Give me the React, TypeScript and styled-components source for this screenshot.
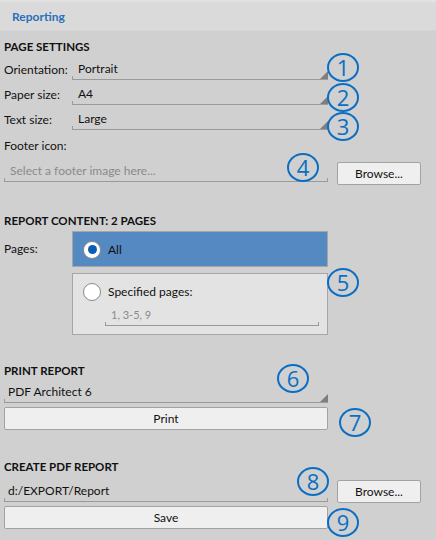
import React from "react";
import styled, { createGlobalStyle } from "styled-components";

const Global = createGlobalStyle`
  html, body { margin: 0; padding: 0; background: #d0d0d0; }
  * { box-sizing: border-box; }
`;

const Panel = styled.div`
  position: relative;
  width: 436px;
  height: 540px;
  background: #d0d0d0;
  font-family: Lato, "Noto Sans", sans-serif;
  font-size: 12px;
  color: #111;
  overflow: hidden;
`;

const Header = styled.div`
  height: 31px;
  background: #dadada;
  border-top: 2px solid #e2e2e2;
  border-bottom: 1px solid #d4d4d4;
  padding-left: 12px;
  display: flex;
  align-items: center;
  color: #2a6ebb;
  font-weight: 700;
  font-size: 12px;
`;

const Body = styled.div`
  padding: 0 4px;
  display: flex;
  flex-direction: column;
`;

const SectionTitle = styled.div<{ $top: number }>`
  margin-top: ${(p) => p.$top}px;
  height: 16px;
  line-height: 16px;
  font-weight: 700;
  font-size: 11.5px;
  color: #111;
`;

const Row = styled.div`
  display: grid;
  grid-template-columns: 68px 256px;
  align-items: end;
  height: 25px;
`;

const Label = styled.div`
  line-height: 16px;
  padding-bottom: 2px;
`;

const FreeLabel = styled.div`
  margin-top: 8px;
  height: 16px;
  line-height: 16px;
`;

const Field = styled.div<{ $placeholder?: boolean }>`
  position: relative;
  height: 100%;
  border-bottom: 1px solid #9a9a9a;
  padding: 0 6px 2px;
  display: flex;
  align-items: flex-end;
  line-height: 16px;
  color: ${(p) => (p.$placeholder ? "#8a8a8a" : "#111")};
  &::before {
    content: "";
    position: absolute;
    left: 0;
    bottom: 0;
    width: 1px;
    height: 3px;
    background: #9a9a9a;
  }
`;

const Dropdown = styled(Field)`
  &::after {
    content: "";
    position: absolute;
    right: 0;
    bottom: 0;
    width: 0;
    height: 0;
    border-left: 8px solid transparent;
    border-bottom: 8px solid #7e7e7e;
  }
`;

const Input = styled(Field)`
  &::after {
    content: "";
    position: absolute;
    right: 0;
    bottom: 0;
    width: 1px;
    height: 3px;
    background: #9a9a9a;
  }
`;

const FileRow = styled.div<{ $top: number }>`
  margin-top: ${(p) => p.$top}px;
  display: grid;
  grid-template-columns: 324px 84px;
  column-gap: 9px;
  align-items: start;
`;

const Button = styled.button<{ $top?: number }>`
  margin-top: ${(p) => p.$top ?? 0}px;
  height: 23px;
  background: #efefef;
  border: 1px solid #a2a2a2;
  border-radius: 2px;
  font-family: Lato, "Noto Sans", sans-serif;
  font-size: 12px;
  font-weight: 400;
  color: #111;
  padding: 0;
  cursor: pointer;
`;

const WideButton = styled(Button)`
  width: 324px;
`;

const PagesGrid = styled.div`
  margin-top: 2px;
  display: grid;
  grid-template-columns: 68px 256px;
`;

const PagesLabel = styled.div`
  padding-top: 10px;
  line-height: 16px;
`;

const Options = styled.div`
  display: flex;
  flex-direction: column;
  gap: 6px;
`;

const Option = styled.div<{ $selected?: boolean; $h: number }>`
  height: ${(p) => p.$h}px;
  border: 1px solid #a6a6a6;
  background: ${(p) => (p.$selected ? "#5589c1" : "#e3e3e3")};
  padding: 9px 0 0 10px;
  display: flex;
  flex-direction: column;
`;

const OptionLine = styled.div`
  display: flex;
  align-items: center;
  gap: 7px;
  height: 17px;
`;

const Radio = styled.span<{ $checked?: boolean }>`
  width: 18px;
  height: 18px;
  border-radius: 50%;
  background: #fff;
  border: 1px solid #8a8a8a;
  display: flex;
  align-items: center;
  justify-content: center;
  flex: none;
  &::after {
    content: "";
    display: ${(p) => (p.$checked ? "block" : "none")};
    width: 9px;
    height: 9px;
    border-radius: 50%;
    background: #0b5fb3;
  }
`;

const SubInput = styled(Input)`
  height: 22px;
  margin: 4px 8px 0 22px;
  font-size: 11px;
`;

const PlainField = styled(Dropdown)`
  height: 22px;
  margin-top: 2px;
  width: 324px;
  padding-left: 4px;
`;

const PathInput = styled(Input)`
  height: 25px;
  padding-left: 4px;
`;

const Callout = styled.div<{ $x: number; $y: number }>`
  position: absolute;
  left: ${(p) => p.$x - 16}px;
  top: ${(p) => p.$y - 14.5}px;
  width: 32px;
  height: 29px;
  border: 2px solid #0a6fc4;
  border-radius: 50%;
  color: #0a6fc4;
  font-family: "Open Sans", "Noto Sans", sans-serif;
  font-size: 22px;
  line-height: 25px;
  text-align: center;
  pointer-events: none;
`;

const callouts: [number, number][] = [
  [343, 67],
  [343, 97],
  [343, 126],
  [303, 167],
  [343, 282],
  [293, 378],
  [355, 422],
  [313, 481],
  [343, 522],
];

export default function App() {
  return (
    <>
      <Global />
      <Panel>
        <Header>Reporting</Header>
        <Body>
          <SectionTitle $top={8}>PAGE SETTINGS</SectionTitle>
          <Row>
            <Label>Orientation:</Label>
            <Dropdown>Portrait</Dropdown>
          </Row>
          <Row>
            <Label>Paper size:</Label>
            <Dropdown>A4</Dropdown>
          </Row>
          <Row>
            <Label>Text size:</Label>
            <Dropdown>Large</Dropdown>
          </Row>
          <FreeLabel>Footer icon:</FreeLabel>
          <FileRow $top={4}>
            <Input $placeholder style={{ height: 24 }}>
              Select a footer image here...
            </Input>
            <Button $top={4}>Browse...</Button>
          </FileRow>

          <SectionTitle $top={28}>REPORT CONTENT: 2 PAGES</SectionTitle>
          <PagesGrid>
            <PagesLabel>Pages:</PagesLabel>
            <Options>
              <Option $selected $h={36}>
                <OptionLine>
                  <Radio $checked />
                  All
                </OptionLine>
              </Option>
              <Option $h={62}>
                <OptionLine>
                  <Radio />
                  Specified pages:
                </OptionLine>
                <SubInput $placeholder>1, 3-5, 9</SubInput>
              </Option>
            </Options>
          </PagesGrid>

          <SectionTitle $top={28}>PRINT REPORT</SectionTitle>
          <PlainField>PDF Architect 6</PlainField>
          <WideButton $top={4}>Print</WideButton>

          <SectionTitle $top={29}>CREATE PDF REPORT</SectionTitle>
          <FileRow $top={2}>
            <PathInput>d:/EXPORT/Report</PathInput>
            <Button $top={3}>Browse...</Button>
          </FileRow>
          <WideButton $top={3}>Save</WideButton>
        </Body>
        {callouts.map(([x, y], i) => (
          <Callout key={i} $x={x} $y={y}>
            {i + 1}
          </Callout>
        ))}
      </Panel>
    </>
  );
}
